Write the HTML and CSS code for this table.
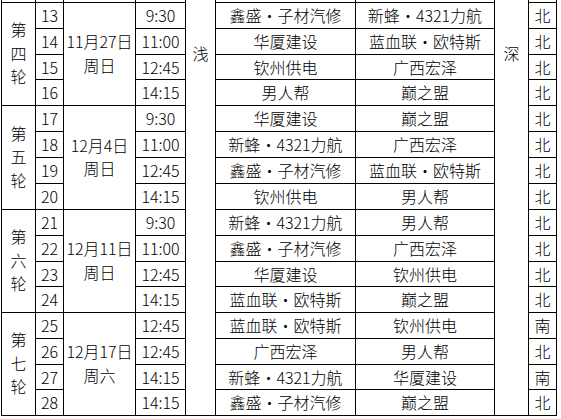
FILE: index.html
```html
<!DOCTYPE html>
<html lang="zh-CN">
<head>
<meta charset="utf-8">
<title>赛程表</title>
<link rel="stylesheet" href="styles.css">
</head>
<body>
<table class="sched">
  <colgroup>
    <col class="w-round"><col class="w-num"><col class="w-date"><col class="w-time"><col class="w-side"><col class="w-team"><col class="w-team2"><col class="w-side2"><col class="w-field">
  </colgroup>
  <tbody>
    <tr class="stub">
      <td></td><td></td><td></td><td></td>
      <td class="side" rowspan="17">浅</td>
      <td></td><td></td>
      <td class="side" rowspan="17">深</td>
      <td></td>
    </tr>

    <tr class="h26">
      <td class="round" rowspan="4">第<br>四<br>轮</td>
      <td>13</td>
      <td class="date" rowspan="4">11月27日<br>周日</td>
      <td>9:30</td>
      <td>鑫盛<span class="dot">·</span>子材汽修</td>
      <td>新蜂<span class="dot">·</span>4321力航</td>
      <td>北</td>
    </tr>
    <tr class="h26"><td>14</td><td>11:00</td><td>华厦建设</td><td>蓝血联<span class="dot">·</span>欧特斯</td><td>北</td></tr>
    <tr class="h25"><td>15</td><td>12:45</td><td>钦州供电</td><td>广西宏泽</td><td>北</td></tr>
    <tr class="h26"><td>16</td><td>14:15</td><td>男人帮</td><td>巅之盟</td><td>北</td></tr>

    <tr class="h26">
      <td class="round" rowspan="4">第<br>五<br>轮</td>
      <td>17</td>
      <td class="date" rowspan="4">12月4日<br>周日</td>
      <td>9:30</td>
      <td>华厦建设</td>
      <td>巅之盟</td>
      <td>北</td>
    </tr>
    <tr class="h26"><td>18</td><td>11:00</td><td>新蜂<span class="dot">·</span>4321力航</td><td>广西宏泽</td><td>北</td></tr>
    <tr class="h26"><td>19</td><td>12:45</td><td>鑫盛<span class="dot">·</span>子材汽修</td><td>蓝血联<span class="dot">·</span>欧特斯</td><td>北</td></tr>
    <tr class="h26"><td>20</td><td>14:15</td><td>钦州供电</td><td>男人帮</td><td>北</td></tr>

    <tr class="h26">
      <td class="round" rowspan="4">第<br>六<br>轮</td>
      <td>21</td>
      <td class="date" rowspan="4">12月11日<br>周日</td>
      <td>9:30</td>
      <td>新蜂<span class="dot">·</span>4321力航</td>
      <td>男人帮</td>
      <td>北</td>
    </tr>
    <tr class="h26"><td>22</td><td>11:00</td><td>鑫盛<span class="dot">·</span>子材汽修</td><td>广西宏泽</td><td>北</td></tr>
    <tr class="h25"><td>23</td><td>12:45</td><td>华厦建设</td><td>钦州供电</td><td>北</td></tr>
    <tr class="h26"><td>24</td><td>14:15</td><td>蓝血联<span class="dot">·</span>欧特斯</td><td>巅之盟</td><td>北</td></tr>

    <tr class="h26">
      <td class="round" rowspan="4">第<br>七<br>轮</td>
      <td>25</td>
      <td class="date" rowspan="4">12月17日<br>周六</td>
      <td>12:45</td>
      <td>蓝血联<span class="dot">·</span>欧特斯</td>
      <td>钦州供电</td>
      <td>南</td>
    </tr>
    <tr class="h26"><td>26</td><td>12:45</td><td>广西宏泽</td><td>男人帮</td><td>北</td></tr>
    <tr class="h25"><td>27</td><td>14:15</td><td>新蜂<span class="dot">·</span>4321力航</td><td>华厦建设</td><td>南</td></tr>
    <tr class="h26"><td>28</td><td>14:15</td><td>鑫盛<span class="dot">·</span>子材汽修</td><td>巅之盟</td><td>北</td></tr>
  </tbody>
</table>
</body>
</html>
```

FILE: styles.css
```css
html, body {
  margin: 0;
  padding: 0;
  background: #ffffff;
}

body {
  padding-left: 1px;
}

.sched {
  border-collapse: collapse;
  table-layout: fixed;
  width: 556px;
  font-family: "Noto Sans CJK SC", "Noto Sans", sans-serif;
  font-size: 16px;
  font-weight: 300;
  color: #000000;
}

.w-round { width: 34px; }
.w-num { width: 28px; }
.w-date { width: 72px; }
.w-time { width: 50px; }
.w-side { width: 30px; }
.w-team { width: 140px; }
.w-team2 { width: 139px; }
.w-side2 { width: 34px; }
.w-field { width: 28px; }

.sched td {
  border: 1px solid #000000;
  padding: 0;
  text-align: center;
  vertical-align: middle;
  line-height: 20px;
  white-space: nowrap;
  overflow: hidden;
}

.stub {
  height: 2px;
}

.stub td {
  border-top: none;
  font-size: 0;
  line-height: 0;
}

.sched td.side {
  border-top: none;
  font-size: 16px;
  line-height: 20px;
  vertical-align: top;
  padding-top: 43px;
}

.h26 { height: 26px; }
.h25 { height: 25px; }

.sched td.round,
.sched td.date {
  line-height: 23.5px;
}

.dot {
  display: inline-block;
  width: 1em;
  text-align: center;
}
```
